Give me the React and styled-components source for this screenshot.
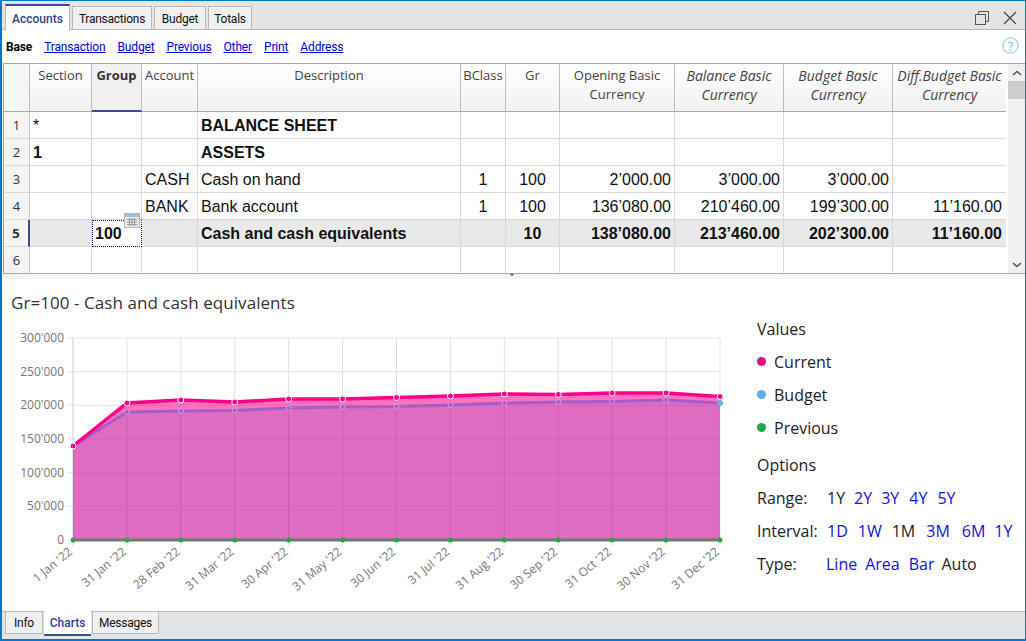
import React from "react";
import styled, { createGlobalStyle } from "styled-components";

const UI_FONT = '"Open Sans", "Noto Sans", sans-serif';
const TAB_FONT = 'Roboto, "Open Sans", sans-serif';
const CELL_FONT = '"Liberation Sans", Arial, sans-serif';

const GlobalStyle = createGlobalStyle`
  html, body {
    margin: 0;
    padding: 0;
    background: #ffffff;
  }
`;

// Window frame
const Frame = styled.div`
  box-sizing: border-box;
  width: 1026px;
  height: 641px;
  display: flex;
  flex-direction: column;
  overflow: hidden;
  border: 1px solid #0078d7;
  border-bottom-width: 2px;
  border-left-width: 2px;
  font-family: ${UI_FONT};
  background: #ffffff;
`;

// Top tabs
const TopBar = styled.div`
  box-sizing: border-box;
  height: 29px;
  flex: none;
  display: flex;
  align-items: flex-end;
  gap: 2px;
  padding-left: 3px;
  background: #e4e4e4;
  border-bottom: 1px solid #b8b8b8;
`;

const TopTab = styled.div`
  box-sizing: border-box;
  height: ${(p) => (p.$active ? "26px" : "23px")};
  width: ${(p) => p.$width}px;
  margin-bottom: ${(p) => (p.$active ? "-1px" : "0")};
  padding-top: 2px;
  display: flex;
  align-items: center;
  justify-content: center;
  font-family: ${TAB_FONT};
  font-size: 12px;
  letter-spacing: ${(p) => (p.$active ? "0" : "-0.25px")};
  background: ${(p) => (p.$active ? "#ffffff" : "#f0f0f0")};
  color: ${(p) => (p.$active ? "#2f3f8f" : "#111111")};
  font-weight: ${(p) => (p.$active ? 500 : 400)};
  border: 1px solid #b8b8b8;
  border-bottom: none;
  border-top: ${(p) => (p.$active ? "2px solid #3a4a9a" : "1px solid #b8b8b8")};
`;

const WindowButtons = styled.div`
  margin-left: auto;
  align-self: center;
  display: flex;
  align-items: center;
  gap: 13px;
  margin-top: 5px;
  padding-right: 8px;
  color: #444444;
`;

// Sub tabs
const SubBar = styled.div`
  height: 33px;
  flex: none;
  display: flex;
  align-items: center;
  gap: 12px;
  padding-left: 4px;
  padding-right: 6px;
  font-family: ${TAB_FONT};
  font-size: 12px;
  letter-spacing: -0.15px;
`;

const SubLink = styled.a`
  color: ${(p) => (p.$active ? "#000000" : "#0000ee")};
  font-weight: ${(p) => (p.$active ? 700 : 400)};
  text-decoration: ${(p) => (p.$active ? "none" : "underline")};
`;

const HelpIcon = styled.div`
  margin-left: auto;
  margin-top: -3px;
  display: flex;
`;

// Table
const TableWrap = styled.div`
  box-sizing: border-box;
  height: 211px;
  flex: none;
  margin-left: 1px;
  display: flex;
  border-top: 1px solid #a8a8a8;
  border-left: 1px solid #a8a8a8;
  border-bottom: 1px solid #a8a8a8;
`;

const Table = styled.div`
  display: grid;
  width: 1003px;
  grid-template-columns: 26px 62px 50px 56px 263px 45px 54px 115px 109px 109px 114px;
  grid-template-rows: 48px repeat(6, 27px);
  align-content: start;
  overflow: hidden;
`;

const HeadCell = styled.div`
  box-sizing: border-box;
  padding-top: 2px;
  text-align: center;
  font-size: ${(p) => (p.$italic ? "14px" : "13px")};
  line-height: 19px;
  color: ${(p) => (p.$active ? "#333333" : "#444444")};
  font-weight: ${(p) => (p.$active ? 700 : 400)};
  font-style: ${(p) => (p.$italic ? "italic" : "normal")};
  white-space: pre-line;
  background: ${(p) =>
    p.$active ? "#f1f1f1" : "linear-gradient(#ffffff, #f1f1f1)"};
  border-right: 1px solid #bcbcbc;
  border-bottom: ${(p) => (p.$active ? "2px solid #3a4a9a" : "1px solid #a8a8a8")};
`;

const Corner = styled(HeadCell)`
  background: linear-gradient(90deg, #f0fbfb, #f4f4f4);
`;

const RowNumber = styled.div`
  box-sizing: border-box;
  display: flex;
  align-items: center;
  justify-content: center;
  font-family: ${UI_FONT};
  font-size: 13px;
  font-weight: ${(p) => (p.$current ? 700 : 400)};
  color: #333333;
  background: #f5f5f5;
  border-right: ${(p) => (p.$current ? "2px solid #3a4a9a" : "1px solid #c8c8c8")};
  border-bottom: 1px solid #d8d8d8;
`;

const Cell = styled.div`
  box-sizing: border-box;
  position: relative;
  display: flex;
  align-items: center;
  justify-content: ${(p) =>
    p.$align === "right" ? "flex-end" : p.$align === "center" ? "center" : "flex-start"};
  padding: 1px ${(p) => p.$padRight ?? 3}px 0 3px;
  font-family: ${CELL_FONT};
  font-size: 16px;
  font-weight: ${(p) => (p.$bold ? 700 : 400)};
  color: #111111;
  white-space: nowrap;
  background: ${(p) => (p.$current ? "#e9e9e9" : "#ffffff")};
  border-right: 1px solid #d8d8d8;
  border-bottom: 1px solid #d8d8d8;
`;

const EditCell = styled(Cell)`
  background: #ffffff;
  border: 1px dotted #10106a;
  padding-left: 2px;
`;

const CalendarBadge = styled.svg`
  position: absolute;
  top: -8px;
  right: 1px;
`;

const ScrollBar = styled.div`
  width: 17px;
  flex: none;
  margin-left: 2px;
  display: flex;
  flex-direction: column;
  justify-content: space-between;
  background: #f0f0f0;
`;

const ScrollButton = styled.div`
  height: 17px;
  display: flex;
  align-items: center;
  justify-content: center;
`;

const ScrollThumb = styled.div`
  height: 18px;
  margin-bottom: auto;
  background: #cdcdcd;
`;

// Divider between table and chart
const Sash = styled.div`
  height: 5px;
  flex: none;
  background: #f4f4f4;
  position: relative;
`;

const SashMark = styled.div`
  position: absolute;
  left: 508px;
  top: 0;
  width: 0;
  height: 0;
  border-left: 2px solid transparent;
  border-right: 2px solid transparent;
  border-top: 2px solid #444444;
`;

// Chart pane
const ChartPane = styled.div`
  flex: 1;
  min-height: 0;
  display: flex;
  justify-content: space-between;
`;

const ChartColumn = styled.div`
  width: 750px;
  display: flex;
  flex-direction: column;
`;

const ChartTitle = styled.div`
  padding: 12px 0 0 9px;
  height: 25px;
  font-size: 17px;
  line-height: 24px;
  letter-spacing: 0.06px;
  color: #333333;
`;

const SidePanel = styled.div`
  width: 268px;
  padding-top: 33px;
  display: flex;
  flex-direction: column;
  font-size: 16px;
  color: #222222;
`;

const SideRow = styled.div`
  height: 33px;
  flex: none;
  display: flex;
  align-items: center;
  margin-top: ${(p) => p.$gap || 0}px;
`;

const Dot = styled.span`
  width: 9px;
  height: 9px;
  border-radius: 50%;
  margin-right: 8px;
  background: ${(p) => p.$color};
`;

const OptionLabel = styled.span`
  width: ${(p) => p.$width || 70}px;
`;

const Option = styled.span`
  margin-right: ${(p) => p.$gap}px;
  color: ${(p) => (p.$on ? "#222222" : "#1010ee")};
`;

// Bottom tabs
const BottomBar = styled.div`
  box-sizing: border-box;
  height: 28px;
  flex: none;
  display: flex;
  align-items: flex-start;
  gap: 1px;
  padding-left: 3px;
  background: #e4e4e4;
  border-top: 1px solid #b8b8b8;
`;

const BottomTab = styled.div`
  box-sizing: border-box;
  width: ${(p) => p.$width}px;
  height: ${(p) => (p.$active ? "25px" : "22px")};
  margin-top: ${(p) => (p.$active ? "-1px" : "0")};
  display: flex;
  align-items: center;
  justify-content: center;
  font-family: ${TAB_FONT};
  font-size: 12px;
  letter-spacing: ${(p) => (p.$active ? "0" : "-0.25px")};
  font-weight: ${(p) => (p.$active ? 500 : 400)};
  color: ${(p) => (p.$active ? "#2f3f8f" : "#111111")};
  background: ${(p) => (p.$active ? "#ffffff" : "#f0f0f0")};
  border: ${(p) => (p.$active ? "none" : "1px solid #b8b8b8")};
  border-top: none;
  border-bottom: ${(p) => (p.$active ? "2px solid #3a4a9a" : "1px solid #b8b8b8")};
`;

const columns = [
  { title: "Section" },
  { title: "Group", active: true },
  { title: "Account" },
  { title: "Description" },
  { title: "BClass" },
  { title: "Gr" },
  { title: "Opening Basic\nCurrency" },
  { title: "Balance Basic\nCurrency", italic: true },
  { title: "Budget Basic\nCurrency", italic: true },
  { title: "Diff.Budget Basic\nCurrency", italic: true },
];

const aligns = ["left", "left", "left", "left", "center", "center", "right", "right", "right", "right"];

const rows = [
  ["*", "", "", "BALANCE SHEET", "", "", "", "", "", ""],
  ["1", "", "", "ASSETS", "", "", "", "", "", ""],
  ["", "", "CASH", "Cash on hand", "1", "100", "2’000.00", "3’000.00", "3’000.00", ""],
  ["", "", "BANK", "Bank account", "1", "100", "136’080.00", "210’460.00", "199’300.00", "11’160.00"],
  ["", "100", "", "Cash and cash equivalents", "", "10", "138’080.00", "213’460.00", "202’300.00", "11’160.00"],
  ["", "", "", "", "", "", "", "", "", ""],
];

const isBoldCell = (r, c) => r === 4 || (r === 1 && c === 0) || (c === 3 && r < 2);

// the chart svg sits at x=2, y=316 of the page
const ORIGIN_Y = 316;
const PLOT = { left: 71, right: 718, top: 338 - ORIGIN_Y, bottom: 540 - ORIGIN_Y };
const stepX = (PLOT.right - PLOT.left) / 12;
const xAt = (i) => PLOT.left + i * stepX;

const dates = ["1 Jan '22", "31 Jan '22", "28 Feb '22", "31 Mar '22", "30 Apr '22", "31 May '22", "30 Jun '22", "31 Jul '22", "31 Aug '22", "30 Sep '22", "31 Oct '22", "30 Nov '22", "31 Dec '22"];
const yLabels = ["300'000", "250'000", "200'000", "150'000", "100'000", "50'000", "0"];

const current = [446, 403, 400, 402, 399, 399, 397.5, 396, 394, 394.5, 393, 393, 396.5].map((y) => y - ORIGIN_Y);
const budget = [446, 412, 411, 410.5, 408, 407, 406.5, 405, 403, 402, 401.5, 400, 403].map((y) => y - ORIGIN_Y);

const linePoints = (ys) => ys.map((y, i) => `${xAt(i)},${y}`).join(" ");
const areaPoints = (ys) => `${PLOT.left},${PLOT.bottom} ${linePoints(ys)} ${PLOT.right},${PLOT.bottom}`;

const Chart = () => (
  <svg width="750" height="295" style={{ display: "block" }} fontFamily={UI_FONT}>
    {yLabels.map((label, i) => {
      const y = PLOT.top + (i * (PLOT.bottom - PLOT.top)) / 6;
      return (
        <g key={label}>
          <line x1={PLOT.left - 6} x2={PLOT.right} y1={y} y2={y} stroke="#e6e6e6" />
          <text x={PLOT.left - 9} y={y + 4} textAnchor="end" fontSize="12" fill="#777777">{label}</text>
        </g>
      );
    })}
    {dates.map((label, i) => (
      <g key={label}>
        <line x1={xAt(i)} x2={xAt(i)} y1={PLOT.top} y2={PLOT.bottom + 6} stroke={i === 0 ? "#cccccc" : "#e2e2e2"} />
        <text
          x={xAt(i)}
          y={PLOT.bottom + 13}
          textAnchor="end"
          fontSize="12"
          fill="#777777"
          transform={`rotate(-40 ${xAt(i)} ${PLOT.bottom + 13})`}
        >
          {label}
        </text>
      </g>
    ))}
    <polygon points={areaPoints(current)} fill="#ff0088" fillOpacity="0.55" />
    <polygon points={areaPoints(budget)} fill="rgb(90, 80, 200)" fillOpacity="0.2" />
    {dates.map((label, i) =>
      i > 0 && i < 12 ? (
        <line key={label} x1={xAt(i)} x2={xAt(i)} y1={current[i]} y2={PLOT.bottom} stroke="#a04090" strokeOpacity="0.1" />
      ) : null
    )}
    <polyline points={linePoints(budget)} fill="none" stroke="#a85cc8" strokeWidth="3" />
    <polyline points={linePoints(current)} fill="none" stroke="#ff0088" strokeWidth="3.5" />
    <line x1={PLOT.left} x2={PLOT.right} y1={PLOT.bottom} y2={PLOT.bottom} stroke="#6e7a6e" strokeWidth="3" />
    {budget.map((y, i) =>
      i > 0 && i < 12 ? (
        <circle key={i} cx={xAt(i)} cy={y} r="2.5" fill="#a85cc8" stroke="#d99adf" />
      ) : null
    )}
    <circle cx={xAt(12)} cy={budget[12]} r="3" fill="#62aef0" />
    {current.map((y, i) => (
      <circle key={i} cx={xAt(i)} cy={y} r="3" fill="#ff0088" stroke="#ffffff" />
    ))}
    {dates.map((label, i) => (
      <circle key={label} cx={xAt(i)} cy={PLOT.bottom} r="2.5" fill="#22aa44" />
    ))}
  </svg>
);

const App = () => {
  return (
    <>
      <GlobalStyle />
      <Frame>
        <TopBar>
          <TopTab $active $width={65}>Accounts</TopTab>
          <TopTab $width={80}>Transactions</TopTab>
          <TopTab $width={52}>Budget</TopTab>
          <TopTab $width={44}>Totals</TopTab>
          <WindowButtons>
            <svg width="16" height="16" viewBox="0 0 16 16" fill="none" stroke="#555555">
              <rect x="1.5" y="4.5" width="10" height="10" />
              <path d="M4.5 4.5V1.5H14.5V11.5H11.5" />
            </svg>
            <svg width="14" height="14" viewBox="0 0 14 14" fill="none" stroke="#444444" strokeWidth="1.2">
              <path d="M1 1L13 13M13 1L1 13" />
            </svg>
          </WindowButtons>
        </TopBar>

        <SubBar>
          <SubLink $active>Base</SubLink>
          <SubLink>Transaction</SubLink>
          <SubLink>Budget</SubLink>
          <SubLink>Previous</SubLink>
          <SubLink>Other</SubLink>
          <SubLink>Print</SubLink>
          <SubLink>Address</SubLink>
          <HelpIcon>
            <svg width="17" height="17" viewBox="0 0 17 17" fill="none">
              <circle cx="8.5" cy="8.5" r="7.7" stroke="#7cbce8" />
              <text x="8.5" y="13.5" textAnchor="middle" fontSize="13" fontFamily={UI_FONT} fill="#7cbce8">?</text>
            </svg>
          </HelpIcon>
        </SubBar>

        <TableWrap>
          <Table>
            <Corner />
            {columns.map((col) => (
              <HeadCell key={col.title} $active={col.active} $italic={col.italic}>
                {col.title}
              </HeadCell>
            ))}
            {rows.map((row, r) => (
              <React.Fragment key={r}>
                <RowNumber $current={r === 4}>{r + 1}</RowNumber>
                {row.map((value, c) =>
                  r === 4 && c === 1 ? (
                    <EditCell key={c} $bold>
                      {value}
                      <CalendarBadge width="16" height="15" viewBox="0 0 16 15">
                        <rect x="0.5" y="0.5" width="15" height="14" fill="#e8e8e8" stroke="#b8b8b8" />
                        <rect x="1" y="1" width="14" height="3" fill="#8fc0e8" />
                        <path d="M3 6.5H13M3 9H13M3 11.5H13M5.5 5V13M8 5V13M10.5 5V13" stroke="#9a9a9a" />
                      </CalendarBadge>
                    </EditCell>
                  ) : (
                    <Cell
                      key={c}
                      $align={aligns[c]}
                      $bold={isBoldCell(r, c)}
                      $current={r === 4}
                      $padRight={c === 9 ? 4 : 3}
                    >
                      {value}
                    </Cell>
                  )
                )}
              </React.Fragment>
            ))}
          </Table>
          <ScrollBar>
            <ScrollButton>
              <svg width="10" height="6" viewBox="0 0 10 6" fill="none" stroke="#555555" strokeWidth="1.6">
                <path d="M1 5L5 1.5L9 5" />
              </svg>
            </ScrollButton>
            <ScrollThumb />
            <ScrollButton>
              <svg width="10" height="6" viewBox="0 0 10 6" fill="none" stroke="#555555" strokeWidth="1.6">
                <path d="M1 1L5 4.5L9 1" />
              </svg>
            </ScrollButton>
          </ScrollBar>
        </TableWrap>

        <Sash>
          <SashMark />
        </Sash>

        <ChartPane>
          <ChartColumn>
            <ChartTitle>Gr=100 - Cash and cash equivalents</ChartTitle>
            <Chart />
          </ChartColumn>
          <SidePanel>
            <SideRow>Values</SideRow>
            <SideRow><Dot $color="#ff0088" />Current</SideRow>
            <SideRow><Dot $color="#62aef0" />Budget</SideRow>
            <SideRow><Dot $color="#22aa44" />Previous</SideRow>
            <SideRow $gap={4}>Options</SideRow>
            <SideRow>
              <OptionLabel>Range:</OptionLabel>
              <Option $on $gap={9}>1Y</Option>
              <Option $gap={9}>2Y</Option>
              <Option $gap={10}>3Y</Option>
              <Option $gap={10}>4Y</Option>
              <Option $gap={9}>5Y</Option>
            </SideRow>
            <SideRow>
              <OptionLabel>Interval:</OptionLabel>
              <Option $gap={10}>1D</Option>
              <Option $gap={10}>1W</Option>
              <Option $on $gap={11}>1M</Option>
              <Option $gap={12}>3M</Option>
              <Option $gap={9}>6M</Option>
              <Option $gap={0}>1Y</Option>
            </SideRow>
            <SideRow>
              <OptionLabel $width={69}>Type:</OptionLabel>
              <Option $gap={8}>Line</Option>
              <Option $gap={9}>Area</Option>
              <Option $gap={7}>Bar</Option>
              <Option $on $gap={0}>Auto</Option>
            </SideRow>
          </SidePanel>
        </ChartPane>

        <BottomBar>
          <BottomTab $width={38}>Info</BottomTab>
          <BottomTab $active $width={47}>Charts</BottomTab>
          <BottomTab $width={67}>Messages</BottomTab>
        </BottomBar>
      </Frame>
    </>
  );
};

export default App;
